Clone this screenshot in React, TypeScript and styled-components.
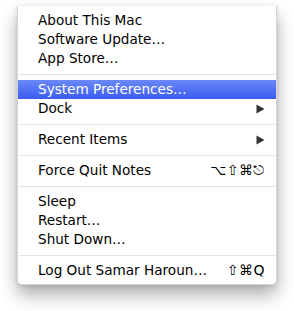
import React from "react";
import styled, { createGlobalStyle } from "styled-components";

const Global = createGlobalStyle`
  html, body { margin: 0; padding: 0; background: #ffffff; }
  body { font-family: "DejaVu Sans", "Liberation Sans", sans-serif; }
  * { box-sizing: border-box; }
`;

const Page = styled.div`
  padding: 6px 0 0 17px;
  width: 294px;
  height: 311px;
`;

const Menu = styled.div`
  width: 260px;
  padding: 5px 0 4px;
  background: #ffffff;
  border: 1px solid rgba(0, 0, 0, 0.16);
  border-top: none;
  border-radius: 0 0 5px 5px;
  box-shadow: 0 10px 18px rgba(0, 0, 0, 0.32), 0 1px 4px rgba(0, 0, 0, 0.12);
  display: flex;
  flex-direction: column;
`;

const Item = styled.div<{ $active?: boolean }>`
  height: 19px;
  display: flex;
  align-items: center;
  justify-content: space-between;
  padding: 0 11px 0 20px;
  font-size: 13.6px;
  line-height: 19px;
  color: ${(p) => (p.$active ? "#ffffff" : "#000000")};
  background: ${(p) =>
    p.$active ? "linear-gradient(#6a88f7, #3b5cf3)" : "transparent"};
  white-space: nowrap;
`;

const Label = styled.span``;

const Shortcut = styled.span`
  font-size: 14px;
  letter-spacing: 0.5px;
  color: #000;
`;

const Separator = styled.div`
  height: 12px;
  display: flex;
  align-items: center;
  padding: 0 1px;
  &::after {
    content: "";
    flex: 1;
    height: 1px;
    background: #e2e2e2;
  }
`;

const Arrow = () => (
  <svg width="9" height="10" viewBox="0 0 9 10">
    <polygon points="0.5,0.5 8.5,5 0.5,9.5" fill="#333333" />
  </svg>
);

type Entry =
  | { kind: "sep" }
  | { kind: "item"; label: string; active?: boolean; sub?: boolean; key?: string };

const entries: Entry[] = [
  { kind: "item", label: "About This Mac" },
  { kind: "item", label: "Software Update…" },
  { kind: "item", label: "App Store…" },
  { kind: "sep" },
  { kind: "item", label: "System Preferences…", active: true },
  { kind: "item", label: "Dock", sub: true },
  { kind: "sep" },
  { kind: "item", label: "Recent Items", sub: true },
  { kind: "sep" },
  { kind: "item", label: "Force Quit Notes", key: "⌥⇧⌘⎋" },
  { kind: "sep" },
  { kind: "item", label: "Sleep" },
  { kind: "item", label: "Restart…" },
  { kind: "item", label: "Shut Down…" },
  { kind: "sep" },
  { kind: "item", label: "Log Out Samar Haroun…", key: "⇧⌘Q" },
];

export default function App() {
  return (
    <>
      <Global />
      <Page>
        <Menu>
          {entries.map((e, i) =>
            e.kind === "sep" ? (
              <Separator key={i} />
            ) : (
              <Item key={i} $active={e.active}>
                <Label>{e.label}</Label>
                {e.sub && <Arrow />}
                {e.key && <Shortcut>{e.key}</Shortcut>}
              </Item>
            )
          )}
        </Menu>
      </Page>
    </>
  );
}
